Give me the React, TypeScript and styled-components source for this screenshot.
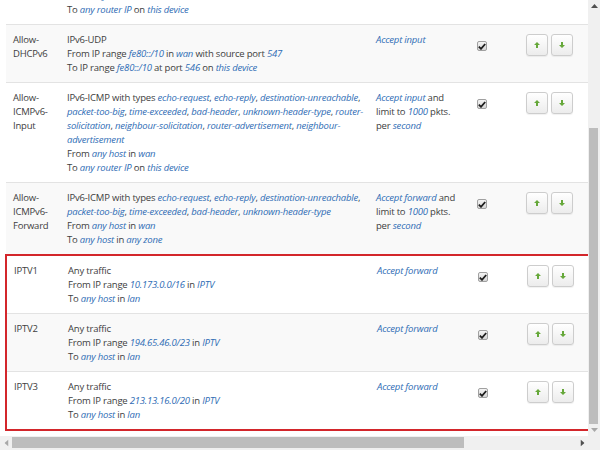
import React, { useLayoutEffect, useRef, useState } from 'react';
import styled, { createGlobalStyle } from 'styled-components';

const TEXT = '#404040';
const LINK = '#2f6db5';
const LINE = '#e3e3e3';
const SHADE = '#f9f9f9';
const BAR = '#f0f0f0';
const THUMB = '#bdbdbd';

const GlobalStyle = createGlobalStyle`
  html, body {
    margin: 0;
    padding: 0;
    background: #fff;
  }
  body {
    font-family: "Open Sans", "DejaVu Sans", sans-serif;
    font-size: 9.5px;
    letter-spacing: -0.2px;
    line-height: 14px;
    color: ${ TEXT };
  }
`;

// window frame: content viewport plus drawn scroll bars
const Frame = styled.div`
  display: grid;
  grid-template-columns: 1fr 12px;
  grid-template-rows: 1fr 14px;
  width: 600px;
  height: 450px;
  background: ${ BAR };
`;

const Viewport = styled.div`
  overflow: hidden;
  background: #fff;
`;

const VBar = styled.div`
  display: flex;
  flex-direction: column;
  background: ${ BAR };
`;

const HBar = styled.div`
  display: flex;
  background: ${ BAR };
`;

const Track = styled.div<{ $vertical?: boolean }>`
  flex: 1;
  display: flex;
  flex-direction: ${ p => p.$vertical ? 'column' : 'row' };
  padding: ${ p => p.$vertical ? '0 2px 0 1px' : '1px 0 2px' };
`;

const Thumb = styled.div`
  background: ${ THUMB };
  flex: none;
`;

const ArrowBox = styled.div<{ $dir: 'up' | 'down' | 'left' | 'right'; $off?: boolean }>`
  flex: none;
  display: flex;
  align-items: center;
  justify-content: center;
  width: 12px;
  height: 12px;
  ${ p => p.$dir === 'left' || p.$dir === 'right' ? 'height: 14px;' : '' }
  color: ${ p => p.$off ? '#a8a8a8' : '#505050' };

  svg {
    transform: rotate(${ p => ({ up: 0, right: 90, down: 180, left: 270 })[p.$dir] }deg);
  }
`;

const BarArrow = ({ dir, off }: { dir: 'up' | 'down' | 'left' | 'right'; off?: boolean }) => (
  <ArrowBox $dir={ dir } $off={ off }>
    <svg width="7" height="4" viewBox="0 0 7 4">
      <polygon points="3.5,0 7,4 0,4" fill="currentColor" />
    </svg>
  </ArrowBox>
);

const Page = styled.div`
  width: 728px;
  padding: 0 0 5px 6px;
`;

const Row = styled.div<{ $shade?: boolean }>`
  display: grid;
  grid-template-columns: 54px 309px 101px 49px 61px 1fr;
  background: ${ p => p.$shade ? SHADE : '#fff' };

  & + & {
    border-top: 1px solid ${ LINE };
  }
`;

const HeadRow = styled(Row)`
  font-weight: 700;

  & > div {
    padding-top: 3px;
    padding-bottom: 3px;
  }
`;

const Cell = styled.div`
  padding: 8px 0 7px 7px;
  min-width: 0;
`;

const NameCell = styled(Cell)`
  padding-right: 3px;
`;

const ActionCell = styled(Cell)`
  padding-right: 12px;
`;

const Marked = styled.div`
  margin-left: -1px;
  border: 2px solid #d3262b;
  border-right: none;
`;

const Link = styled.em`
  color: ${ LINK };
  font-style: italic;
`;

const Check = styled.span`
  display: inline-flex;
  align-items: center;
  justify-content: center;
  width: 10px;
  height: 10px;
  margin-top: 8px;
  box-sizing: border-box;
  border: 1px solid #a0a0a0;
  border-radius: 2px;
  background: linear-gradient(#f4f4f4, #d6d6d6);
`;

const Buttons = styled.div`
  display: flex;
  gap: 3px;
  padding-top: 1px;
`;

const SortButton = styled.button`
  display: flex;
  align-items: center;
  justify-content: center;
  width: 22px;
  height: 22px;
  padding: 0;
  border: 1px solid #cdcdcd;
  border-radius: 3px;
  background: linear-gradient(#ffffff, #ececec);
  box-shadow: 0 1px 1px rgba(0, 0, 0, 0.06);
`;

const TextButton = styled.button`
  height: 22px;
  padding: 0 8px;
  margin-left: 8px;
  font: inherit;
  color: ${ TEXT };
  border: 1px solid #cdcdcd;
  border-radius: 3px;
  background: linear-gradient(#ffffff, #ececec);
`;

const Arrow = ({ down }: { down?: boolean }) => (
  <svg width="6" height="6" viewBox="0 0 6 6">
    <polygon
      fill="#66a83a"
      points={ down ? '3,6 6,3 4,3 4,0 2,0 2,3 0,3' : '3,0 6,3 4,3 4,6 2,6 2,3 0,3' }
    />
  </svg>
);

const Enabled = () => (
  <Check>
    <svg width="8" height="7" viewBox="0 0 8 7">
      <path d="M0.8 3.6 L3 5.8 L7.2 1" fill="none" stroke="#1e1e1e" strokeWidth="1.8" />
    </svg>
  </Check>
);

type Rule = {
  name: string;
  match: React.ReactNode;
  action: React.ReactNode;
};

const icmpTypes = (list: string[]) => list.map((t, i) => (
  <React.Fragment key={ t }>
    <Link>{ t }</Link>{ i < list.length - 1 ? ', ' : '' }
  </React.Fragment>
));

const before: Rule[] = [
  {
    name: 'Allow-DHCP-Renew',
    match: <>IPv4-UDP<br />From <Link>any host</Link> in <Link>wan</Link><br />To <Link>any router IP</Link> at port <Link>68</Link> on <Link>this device</Link></>,
    action: <Link>Accept input</Link>,
  },
  {
    name: 'Allow-Ping',
    match: <>IPv4-ICMP with type <Link>echo-request</Link><br />From <Link>any host</Link> in <Link>wan</Link><br />To <Link>any router IP</Link> on <Link>this device</Link></>,
    action: <Link>Accept input</Link>,
  },
  {
    name: 'Allow-IGMP',
    match: <>IPv4-IGMP<br />From <Link>any host</Link> in <Link>wan</Link><br />To <Link>any router IP</Link> on <Link>this device</Link></>,
    action: <Link>Accept input</Link>,
  },
  {
    name: 'Allow-DHCPv6',
    match: <>IPv6-UDP<br />From IP range <Link>fe80::/10</Link> in <Link>wan</Link> with source port <Link>547</Link><br />To IP range <Link>fe80::/10</Link> at port <Link>546</Link> on <Link>this device</Link></>,
    action: <Link>Accept input</Link>,
  },
  {
    name: 'Allow-ICMPv6-Input',
    match: <>IPv6-ICMP with types { icmpTypes(['echo-request', 'echo-reply', 'destination-unreachable', 'packet-too-big', 'time-exceeded', 'bad-header', 'unknown-header-type', 'router-solicitation', 'neighbour-solicitation', 'router-advertisement', 'neighbour-advertisement']) }<br />From <Link>any host</Link> in <Link>wan</Link><br />To <Link>any router IP</Link> on <Link>this device</Link></>,
    action: <><Link>Accept input</Link> and limit to <Link>1000</Link> pkts. per <Link>second</Link></>,
  },
  {
    name: 'Allow-ICMPv6-Forward',
    match: <>IPv6-ICMP with types { icmpTypes(['echo-request', 'echo-reply', 'destination-unreachable', 'packet-too-big', 'time-exceeded', 'bad-header', 'unknown-header-type']) }<br />From <Link>any host</Link> in <Link>wan</Link><br />To <Link>any host</Link> in <Link>any zone</Link></>,
    action: <><Link>Accept forward</Link> and limit to <Link>1000</Link> pkts. per <Link>second</Link></>,
  },
];

const iptv: Rule[] = [
  ['IPTV1', '10.173.0.0/16'],
  ['IPTV2', '194.65.46.0/23'],
  ['IPTV3', '213.13.16.0/20'],
].map(([name, range]) => ({
  name,
  match: <>Any traffic<br />From IP range <Link>{ range }</Link> in <Link>IPTV</Link><br />To <Link>any host</Link> in <Link>lan</Link></>,
  action: <Link>Accept forward</Link>,
}));

const RuleRow = ({ rule, shade }: { rule: Rule; shade: boolean }) => (
  <Row $shade={ shade }>
    <NameCell>{ rule.name }</NameCell>
    <Cell>{ rule.match }</Cell>
    <ActionCell>{ rule.action }</ActionCell>
    <Cell><Enabled /></Cell>
    <Cell>
      <Buttons>
        <SortButton title="Move up"><Arrow /></SortButton>
        <SortButton title="Move down"><Arrow down /></SortButton>
      </Buttons>
    </Cell>
    <Cell>
      <TextButton>Edit</TextButton>
      <TextButton>Delete</TextButton>
    </Cell>
  </Row>
);

type Bars = { vSize: number; vPos: number; hSize: number; hPos: number };

const App = () => {
  const ref = useRef<HTMLDivElement>(null);
  const vTrack = useRef<HTMLDivElement>(null);
  const hTrack = useRef<HTMLDivElement>(null);
  const [bars, setBars] = useState<Bars>({ vSize: 0, vPos: 0, hSize: 0, hPos: 0 });

  useLayoutEffect(() => {
    const vp = ref.current;
    if (!vp || !vTrack.current || !hTrack.current) return;
    vp.scrollTop = vp.scrollHeight;
    const vLen = vTrack.current.clientHeight;
    const hLen = hTrack.current.clientWidth;
    setBars({
      vSize: vLen * vp.clientHeight / vp.scrollHeight,
      vPos: vLen * vp.scrollTop / vp.scrollHeight,
      hSize: hLen * vp.clientWidth / vp.scrollWidth,
      hPos: hLen * vp.scrollLeft / vp.scrollWidth,
    });
  }, []);

  return (
    <>
      <GlobalStyle />
      <Frame>
        <Viewport ref={ ref }>
          <Page>
            <HeadRow>
              <Cell>Name</Cell>
              <Cell>Match</Cell>
              <Cell>Action</Cell>
              <Cell>Enable</Cell>
              <Cell>Sort</Cell>
              <Cell />
            </HeadRow>
            { before.map((r, i) => <RuleRow key={ r.name } rule={ r } shade={ i % 2 === 1 } />) }
            <Marked>
              { iptv.map((r, i) => <RuleRow key={ r.name } rule={ r } shade={ i % 2 === 1 } />) }
            </Marked>
          </Page>
        </Viewport>
        <VBar>
          <BarArrow dir="up" />
          <Track $vertical ref={ vTrack }>
            <Thumb style={ { marginTop: bars.vPos, height: bars.vSize } } />
          </Track>
          <BarArrow dir="down" off />
        </VBar>
        <HBar>
          <BarArrow dir="left" off />
          <Track ref={ hTrack }>
            <Thumb style={ { marginLeft: bars.hPos, width: bars.hSize } } />
          </Track>
          <BarArrow dir="right" />
        </HBar>
        <div />
      </Frame>
    </>
  );
};

export default App;
